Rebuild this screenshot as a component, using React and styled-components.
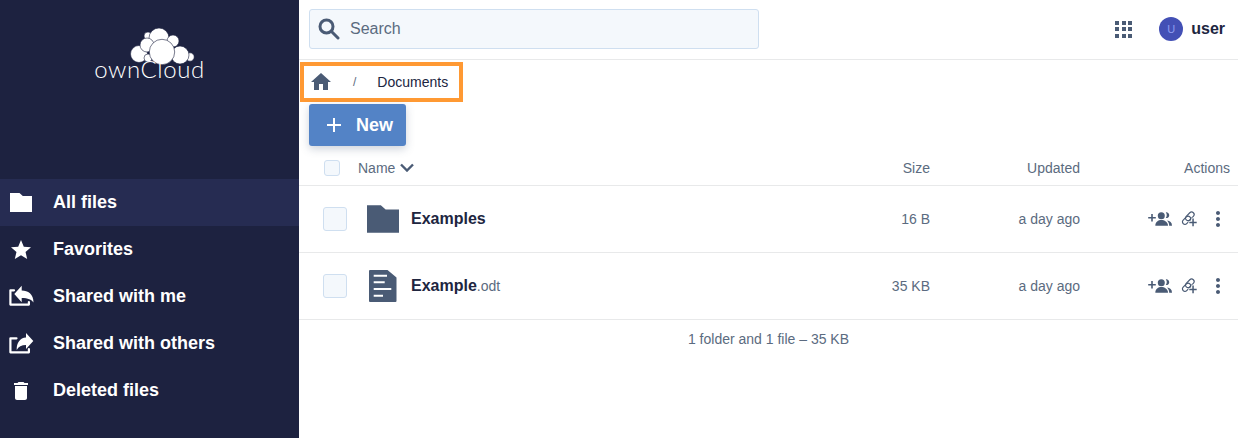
import React from 'react';
import styled, { createGlobalStyle } from 'styled-components';
import { MdHome, MdAdd, MdStar, MdDelete, MdMoreVert } from 'react-icons/md';

const colors = {
  navy: '#1d2240',
  navyActive: '#262c52',
  slate: '#4a5b75',
  text: '#20253f',
  muted: '#5b6b80',
  line: '#e8e9ea',
  field: '#f4f8fc',
  fieldLine: '#cfdff0',
  blue: '#5383c6',
  orange: '#ff9933',
};

const GlobalStyle = createGlobalStyle`
  html, body {
    margin: 0;
    height: 100%;
    background: #fff;
    font-family: "Liberation Sans", Arial, sans-serif;
    overflow: hidden;
  }
  #root { height: 100%; }
`;

const Page = styled.div`
  display: flex;
  height: 438px;
  width: 1238px;
`;

const Sidebar = styled.nav`
  width: 299px;
  flex: none;
  background: ${colors.navy};
  display: flex;
  flex-direction: column;
`;

const LogoWrap = styled.div`
  height: 179px;
  padding-top: 28px;
  box-sizing: border-box;
  display: flex;
  flex-direction: column;
  align-items: center;
`;

const LogoCloud = styled.svg`
  width: 68px;
  height: 38px;
  display: block;
  margin-left: 25px;
`;

const LogoWord = styled.span`
  color: #fff;
  font-family: Lato, sans-serif;
  font-weight: 300;
  font-size: 24px;
  line-height: 20px;
  letter-spacing: 0.6px;
  margin-top: -7px;
`;

const NavItem = styled.div`
  height: 47px;
  display: flex;
  align-items: center;
  color: #fff;
  font-size: 18px;
  font-weight: 700;
  background: ${p => (p.$active ? colors.navyActive : 'transparent')};
`;

const NavIcon = styled.span`
  width: 42px;
  margin-right: 11px;
  flex: none;
  display: flex;
  align-items: center;
  justify-content: center;
  svg { display: block; fill: #fff; }
`;

const Main = styled.main`
  flex: 1;
  min-width: 0;
  display: flex;
  flex-direction: column;
`;

const Topbar = styled.header`
  height: 60px;
  box-sizing: border-box;
  flex: none;
  border-bottom: 1px solid ${colors.line};
  display: flex;
  align-items: center;
  padding: 0 13px 1px 10px;
`;

const Search = styled.div`
  width: 450px;
  height: 40px;
  box-sizing: border-box;
  display: flex;
  align-items: center;
  gap: 10px;
  padding-left: 8px;
  background: ${colors.field};
  border: 1px solid ${colors.fieldLine};
  border-radius: 3px;
  color: ${colors.muted};
  font-size: 16px;
  svg { display: block; }
`;

const TopRight = styled.div`
  margin-left: auto;
  display: flex;
  align-items: center;
`;

const AppsGrid = styled.div`
  display: grid;
  grid-template-columns: repeat(3, 4px);
  grid-auto-rows: 4px;
  gap: 2.5px;
  margin-right: 27px;
  span { background: ${colors.slate}; }
`;

const Avatar = styled.div`
  width: 24px;
  height: 24px;
  border-radius: 50%;
  background: #4350b5;
  color: #8f9cf0;
  font-size: 11px;
  display: flex;
  align-items: center;
  justify-content: center;
`;

const UserName = styled.span`
  font-size: 16px;
  font-weight: 700;
  color: ${colors.text};
  margin-left: 8px;
`;

const Crumbs = styled.div`
  width: 163px;
  height: 40px;
  box-sizing: border-box;
  flex: none;
  margin: 2px 0 2px 1px;
  border: 4px solid ${colors.orange};
  display: flex;
  align-items: center;
  font-size: 14px;
  color: ${colors.text};
  padding-left: 5px;
  svg { color: ${colors.slate}; display: block; }
`;

const Slash = styled.span`
  color: ${colors.muted};
  font-size: 12px;
  margin: 0 21px 0 20px;
`;

const NewButton = styled.button`
  width: 97px;
  height: 42px;
  flex: none;
  margin-left: 10px;
  border: 0;
  border-radius: 3px;
  background: ${colors.blue};
  color: #fff;
  font: 700 18px "Liberation Sans", Arial, sans-serif;
  display: flex;
  align-items: center;
  gap: 10px;
  padding: 0 0 0 13px;
  box-shadow: 0 3px 8px rgba(60, 80, 110, 0.25);
  svg { display: block; }
`;

const grid = `
  display: grid;
  grid-template-columns: 59px 1fr 90px 150px 150px;
  align-items: center;
  padding-right: 8px;
`;

const HeadRow = styled.div`
  ${grid}
  height: 40px;
  padding-top: 4px;
  box-sizing: border-box;
  flex: none;
  border-bottom: 1px solid ${colors.line};
  color: ${colors.muted};
  font-size: 14px;
`;

const Row = styled.div`
  ${grid}
  height: 67px;
  box-sizing: border-box;
  flex: none;
  border-bottom: 1px solid ${colors.line};
  color: ${colors.muted};
  font-size: 14px;
`;

const CheckCell = styled.div`
  padding-left: ${p => (p.$head ? 25 : 24)}px;
`;

const Check = styled.div`
  width: ${p => p.$size}px;
  height: ${p => p.$size}px;
  box-sizing: border-box;
  background: ${colors.field};
  border: 1px solid ${colors.fieldLine};
  border-radius: 3px;
`;

const NameHead = styled.div`
  display: flex;
  align-items: center;
  gap: 5px;
  svg { display: block; }
`;

const NameCell = styled.div`
  display: flex;
  align-items: center;
  gap: 12px;
`;

const FileIconBox = styled.div`
  width: 32px;
  margin-left: 9px;
  display: flex;
  justify-content: center;
  svg { display: block; fill: ${colors.slate}; }
`;

const FileName = styled.span`
  color: ${colors.text};
  font-size: 16px;
  font-weight: 700;
`;

const Ext = styled.span`
  color: ${colors.muted};
  font-size: 14px;
  font-weight: 400;
`;

const Right = styled.div`
  text-align: right;
`;

const Actions = styled.div`
  display: flex;
  justify-content: flex-end;
  align-items: center;
  gap: 9px;
  svg { display: block; fill: ${colors.slate}; }
`;

const Footer = styled.div`
  text-align: center;
  color: ${colors.muted};
  font-size: 14px;
  padding-top: 11px;
`;

const FolderIcon = ({ width, height }) => (
  <svg width={width} height={height} viewBox="0 0 22 19">
    <path d="M0 0h9.500l3.300 3H22v16H0z" />
  </svg>
);

const SearchIcon = () => (
  <svg width="22" height="22" viewBox="0 0 22 22" fill="none" stroke={colors.slate} strokeWidth="3" strokeLinecap="round">
    <circle cx="8.500" cy="8.500" r="6.500" />
    <path d="M13.500 13.500l6.500 6.500" />
  </svg>
);

const ArrowDown = () => (
  <svg width="14" height="9" viewBox="0 0 14 9" style={{ fill: 'none' }} stroke={colors.slate} strokeWidth="2.400">
    <path d="M1 1.500l6 6 6-6" />
  </svg>
);

const ShareInIcon = () => (
  <svg width="26" height="26" viewBox="0 0 26 26">
    <path d="M6 6.300H2.400v14.300h18.500V18" style={{ fill: 'none' }} stroke="#fff" strokeWidth="2.200" strokeLinejoin="round" strokeLinecap="round" />
    <path d="M6.300 10l7.400-8.300v4.800c6.300 0 11.800 3.500 11.800 12-2-3-5.500-4.500-11.800-4.500v4.300z" />
  </svg>
);

const ShareOutIcon = () => (
  <svg width="26" height="26" viewBox="0 0 26 26">
    <path d="M8.500 7.300H2.400v14h18.500V18" style={{ fill: 'none' }} stroke="#fff" strokeWidth="2.200" strokeLinejoin="round" strokeLinecap="round" />
    <path d="M25.300 10L18 2v4.500c-6 .5-9.500 5-9.300 12.500 1.800-3.500 4.800-5 9.300-5v4z" />
  </svg>
);

const DocIcon = () => (
  <svg width="28" height="32" viewBox="0 0 28 32">
    <path fillRule="evenodd" d="M1 0h17.500L27.500 7.500V31a1 1 0 0 1-1 1H1a1 1 0 0 1-1-1V1a1 1 0 0 1 1-1zM4.700 4.700v2H18v-2zM4.700 11.300v2h11v-2zM4.700 18v2h17.600v-2zM4.700 24.700v2H14v-2z" />
  </svg>
);

const GroupAddIcon = () => (
  <svg width="24" height="16" viewBox="0 0 24 16">
    <path d="M3.200 3h1.600v3h3v1.600h-3v3H3.200v-3h-3V6h3z" />
    <circle cx="13.300" cy="4.700" r="3.500" />
    <path d="M17.800 1.300a2.900 2.900 0 1 1 0 5.700 5 5 0 0 0 0-5.700z" />
    <path d="M7.300 14.800c0-3.800 3-5.700 6-5.700s6.700 1.900 6.700 5.700z" />
    <path d="M19 9.500c3 .2 5 2 5 5.300h-2.800c0-2-.6-3.900-2.200-5.300z" />
  </svg>
);

const LinkAddIcon = () => (
  <svg width="16" height="16" viewBox="0 0 16 16">
    <g style={{ fill: 'none' }} stroke={colors.slate} strokeWidth="1.200">
      <rect x="0.800" y="6.800" width="9.500" height="5" rx="2.500" transform="rotate(-45 5.500 9.300)" />
      <rect x="3.800" y="2.800" width="10" height="5" rx="2.500" transform="rotate(-45 8.800 5.300)" />
    </g>
    <path d="M10.500 6.800h3v3.100h2.500v3h-2.500V16h-3v-3.100H7.500v-3h3z" fill="#fff" style={{ fill: '#fff' }} />
    <path d="M11.300 7.600h1.500v3.100h2.900v1.500h-2.900v3.100h-1.500v-3.100H8.300v-1.500h3z" />
  </svg>
);

const nav = [
  { label: 'All files', icon: <FolderIcon width={22} height={19} />, active: true },
  { label: 'Favorites', icon: <MdStar size={24} /> },
  { label: 'Shared with me', icon: <ShareInIcon /> },
  { label: 'Shared with others', icon: <ShareOutIcon /> },
  { label: 'Deleted files', icon: <MdDelete size={24} /> },
];

const files = [
  { name: 'Examples', ext: '', size: '16 B', icon: <FolderIcon width={32} height={28} /> },
  { name: 'Example', ext: '.odt', size: '35 KB', icon: <DocIcon /> },
];

const RowActions = () => (
  <Actions>
    <GroupAddIcon />
    <LinkAddIcon />
    <MdMoreVert size={24} />
  </Actions>
);

export default function App() {
  return (
    <Page>
      <GlobalStyle />
      <Sidebar>
        <LogoWrap>
          {/* circle centres read off the logo, svg origin is at 128,28 */}
          <LogoCloud viewBox="0 0 68 38" fill="#fff" stroke={colors.navy} strokeWidth="0.6">
            <circle cx="20" cy="8" r="4" />
            <circle cx="31" cy="10" r="10" />
            <circle cx="45" cy="13" r="6" />
            <circle cx="11" cy="26" r="8.500" />
            <circle cx="62" cy="29" r="4.200" />
            <circle cx="52" cy="27" r="9" />
            <circle cx="19" cy="17" r="7" />
            <circle cx="20" cy="30" r="4" />
            <circle cx="34" cy="24" r="12.700" />
          </LogoCloud>
          <LogoWord>ownCloud</LogoWord>
        </LogoWrap>
        {nav.map(n => (
          <NavItem key={n.label} $active={n.active}>
            <NavIcon>{n.icon}</NavIcon>
            {n.label}
          </NavItem>
        ))}
      </Sidebar>
      <Main>
        <Topbar>
          <Search>
            <SearchIcon />
            Search
          </Search>
          <TopRight>
            <AppsGrid>
              {Array.from({ length: 9 }, (_, i) => <span key={i} />)}
            </AppsGrid>
            <Avatar>U</Avatar>
            <UserName>user</UserName>
          </TopRight>
        </Topbar>
        <Crumbs>
          <MdHome size={24} />
          <Slash>/</Slash>
          Documents
        </Crumbs>
        <NewButton>
          <MdAdd size={24} />
          New
        </NewButton>
        <HeadRow>
          <CheckCell $head><Check $size={16} /></CheckCell>
          <NameHead>Name <ArrowDown /></NameHead>
          <Right>Size</Right>
          <Right>Updated</Right>
          <Right>Actions</Right>
        </HeadRow>
        {files.map(f => (
          <Row key={f.name}>
            <CheckCell><Check $size={24} /></CheckCell>
            <NameCell>
              <FileIconBox>{f.icon}</FileIconBox>
              <FileName>{f.name}<Ext>{f.ext}</Ext></FileName>
            </NameCell>
            <Right>{f.size}</Right>
            <Right>a day ago</Right>
            <RowActions />
          </Row>
        ))}
        <Footer>1 folder and 1 file – 35 KB</Footer>
      </Main>
    </Page>
  );
}
